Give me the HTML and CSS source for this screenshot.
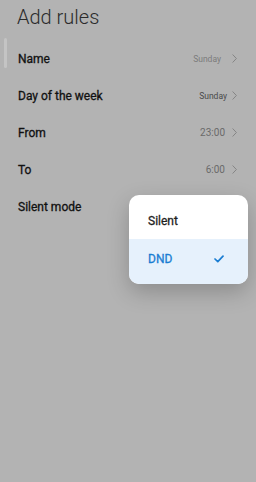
FILE: index.html
```
<!DOCTYPE html>
<html lang="en">
<head>
    <meta charset="UTF-8">
    <meta name="viewport" content="width=device-width, initial-scale=1.0">
    <title>Add rules</title>
    <link rel="stylesheet" href="styles.css">
</head>
<body>
    <div class="scroll-indicator"></div>

    <h1 class="title">Add rules</h1>

    <!-- Rule settings -->
    <div class="rules">
        <div class="row">
            <span class="label">Name</span>
            <span class="right">
                <span class="value value-light">Sunday</span>
                <svg class="chevron" width="5" height="9" viewBox="0 0 5 9"><path d="M0.6 0.5 L4.4 4.5 L0.6 8.5" /></svg>
            </span>
        </div>
        <div class="row">
            <span class="label">Day of the week</span>
            <span class="right">
                <span class="value value-dark">Sunday</span>
                <svg class="chevron" width="5" height="9" viewBox="0 0 5 9"><path d="M0.6 0.5 L4.4 4.5 L0.6 8.5" /></svg>
            </span>
        </div>
        <div class="row">
            <span class="label">From</span>
            <span class="right">
                <span class="value">23:00</span>
                <svg class="chevron" width="5" height="9" viewBox="0 0 5 9"><path d="M0.6 0.5 L4.4 4.5 L0.6 8.5" /></svg>
            </span>
        </div>
        <div class="row">
            <span class="label">To</span>
            <span class="right">
                <span class="value">6:00</span>
                <svg class="chevron" width="5" height="9" viewBox="0 0 5 9"><path d="M0.6 0.5 L4.4 4.5 L0.6 8.5" /></svg>
            </span>
        </div>
        <div class="row">
            <span class="label">Silent mode</span>
        </div>
    </div>

    <!-- Mode popup -->
    <div class="popup">
        <div class="option option-first">Silent</div>
        <div class="option option-selected">
            <span>DND</span>
            <svg class="check" width="10" height="8" viewBox="0 0 10 8"><path d="M1 4 L3.8 6.6 L9 1.2" /></svg>
        </div>
    </div>
</body>
</html>
```

FILE: styles.css
```
* { box-sizing: border-box; }

body {
    margin: 0;
    width: 256px;
    height: 482px;
    background-color: #b3b3b3;
    font-family: Roboto, 'Noto Sans', sans-serif;
    position: relative;
    overflow: hidden;
}

.scroll-indicator {
    position: absolute;
    left: 4px;
    top: 38px;
    width: 3px;
    height: 30px;
    border-radius: 2px;
    background-color: #c4c4c4;
}

.title {
    margin: 0;
    height: 40px;
    padding: 5px 0 0 17px;
    font-size: 20px;
    line-height: 24px;
    font-weight: 300;
    color: #2b2b2b;
}

.row {
    height: 37px;
    padding: 0 19px 0 18px;
    display: flex;
    align-items: center;
    justify-content: space-between;
}

.label {
    font-size: 12px;
    font-weight: 400;
    color: #111;
    -webkit-text-stroke: 0.3px #111;
}

.right {
    display: flex;
    align-items: center;
}

.value {
    font-size: 10px;
    color: #6a6a6a;
    margin-right: 7px;
}

.value-light {
    color: #7c7c7c;
    font-size: 8.5px;
    margin-right: 11px;
}

.value-dark {
    color: #4a4a4a;
    font-size: 8.5px;
    margin-right: 5px;
}

.chevron path {
    fill: none;
    stroke: #858585;
    stroke-width: 1;
}

.popup {
    position: absolute;
    left: 129px;
    top: 195px;
    width: 119px;
    border-radius: 10px;
    overflow: hidden;
    background: #fff;
    box-shadow: 0 8px 22px rgba(0, 0, 0, 0.22);
}

.option {
    display: flex;
    align-items: center;
    justify-content: space-between;
    padding: 0 24px 0 19px;
    font-size: 12px;
    font-weight: 400;
    -webkit-text-stroke: 0.3px currentColor;
}

.option-first {
    height: 44px;
    padding-top: 8px;
    color: #1e1e1e;
}

.option-selected {
    height: 45px;
    padding-bottom: 6px;
    background-color: #e6f1fc;
    color: #1a7dd2;
}

.check path {
    fill: none;
    stroke: #1a7dd2;
    stroke-width: 1.7;
    stroke-linecap: round;
    stroke-linejoin: round;
}
```
